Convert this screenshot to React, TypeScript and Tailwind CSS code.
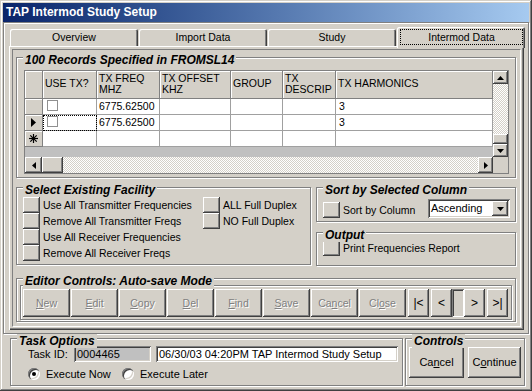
import React from 'react';

const raised = 'bg-[#d4d0c8] shadow-[inset_-1px_-1px_0_#404040,inset_1px_1px_0_#fff,inset_-2px_-2px_0_#808080]';
const sunken = 'shadow-[inset_1px_1px_0_#808080,inset_-1px_-1px_0_#fff,inset_2px_2px_0_#404040,inset_-2px_-2px_0_#d4d0c8]';
const hdr = 'bg-[#d4d0c8] border-r border-b border-[#808080] shadow-[inset_1px_1px_0_#fff]';
const cell = 'bg-white border-r border-b border-[#a0a0a0]';
const hatch = 'bg-[image:repeating-conic-gradient(#fff_0_25%,#d4d0c8_0_50%)] bg-[length:2px_2px]';
const disabled = 'text-[#808080] [text-shadow:1px_1px_0_#fff]';

function Group({ title, className, children }: { title: string; className: string; children?: React.ReactNode }) {
    return (
        <div className={`relative border border-[#808080] shadow-[inset_1px_1px_0_#fff,1px_1px_0_#fff] ${className}`}>
            <span className="absolute -top-[5px] left-[6px] bg-[#d4d0c8] px-[2px] text-[12px] leading-[14px] font-bold italic text-black whitespace-nowrap">
                {title}
            </span>
            {children}
        </div>
    );
}

function Arrow({ dir }: { dir: 'up' | 'down' | 'left' | 'right' }) {
    const vert = dir === 'up' || dir === 'down';
    const pts = { up: '0,4 7,4 3.5,0', down: '0,0 7,0 3.5,4', left: '4,0 4,7 0,3.5', right: '0,0 0,7 4,3.5' }[dir];
    return (
        <svg width={vert ? 7 : 4} height={vert ? 4 : 7}>
            <polygon points={pts} fill="#000" />
        </svg>
    );
}

const columns = [
    { w: 'w-[54px]', head: ['USE TX?'] },
    { w: 'w-[63px]', head: ['TX FREQ', 'MHZ'] },
    { w: 'w-[71px]', head: ['TX OFFSET', 'KHZ'] },
    { w: 'w-[52px]', head: ['GROUP'] },
    { w: 'w-[53px]', head: ['TX', 'DESCRIP'] },
    { w: 'w-[157px]', head: ['TX HARMONICS'] },
];

const rows = [
    { mark: '', check: true, freq: '6775.62500', harm: '3', focus: false },
    { mark: 'current', check: true, freq: '6775.62500', harm: '3', focus: true },
    { mark: 'new', check: false, freq: '', harm: '', focus: false },
];

function RecordGrid() {
    return (
        <div className="w-[485px] h-[104px] border border-[#808080] flex bg-[#c0c0c0]">
            <div className="w-[468px] flex flex-col">
                {/* header */}
                <div className="flex h-[28px]">
                    <div className={`w-[18px] ${hdr}`} />
                    {columns.map((c, i) => (
                        <div key={i} className={`${c.w} ${hdr} flex flex-col justify-center pl-[2px] pb-[2px] leading-[11px]`}>
                            {c.head.map((h) => (
                                <span key={h}>{h}</span>
                            ))}
                        </div>
                    ))}
                </div>
                {/* rows */}
                {rows.map((r, i) => (
                    <div key={i} className="flex h-[16px]">
                        <div className={`w-[18px] ${hdr} flex items-center justify-center`}>
                            {r.mark === 'current' && (
                                <svg width="5" height="9">
                                    <polygon points="0,0 5,4.5 0,9" fill="#000" />
                                </svg>
                            )}
                            {r.mark === 'new' && (
                                <svg width="9" height="9" stroke="#000" strokeWidth="1.2">
                                    <line x1="4.5" y1="0" x2="4.5" y2="9" />
                                    <line x1="0" y1="4.5" x2="9" y2="4.5" />
                                    <line x1="1.3" y1="1.3" x2="7.7" y2="7.7" />
                                    <line x1="7.7" y1="1.3" x2="1.3" y2="7.7" />
                                </svg>
                            )}
                        </div>
                        <div className={`w-[54px] ${cell} pl-[4px] pt-[1px] ${r.focus ? 'outline outline-dotted outline-black -outline-offset-1' : ''}`}>
                            {r.check && <div className="w-[11px] h-[11px] border border-[#909090] bg-white" />}
                        </div>
                        <div className={`w-[63px] ${cell} pl-[2px] leading-[15px]`}>{r.freq}</div>
                        <div className={`w-[71px] ${cell}`} />
                        <div className={`w-[52px] ${cell}`} />
                        <div className={`w-[53px] ${cell}`} />
                        <div className={`w-[157px] ${cell} pl-[3px] leading-[15px]`}>{r.harm}</div>
                    </div>
                ))}
                <div className="h-[10px] bg-[#c0c0c0]" />
                {/* horizontal scrollbar */}
                <div className="flex h-[16px]">
                    <div className={`w-[17px] ${raised} flex items-center justify-center`}>
                        <Arrow dir="left" />
                    </div>
                    <div className={`w-[21px] ${raised}`} />
                    <div className={`flex-1 ${hatch}`} />
                    <div className={`w-[15px] ${raised} flex items-center justify-center`}>
                        <Arrow dir="right" />
                    </div>
                </div>
            </div>
            {/* vertical scrollbar */}
            <div className="w-[15px] flex flex-col">
                <div className={`h-[13px] ${raised} flex items-center justify-center`}>
                    <Arrow dir="up" />
                </div>
                <div className={`h-[50px] ${hatch}`} />
                <div className={`h-[10px] ${raised}`} />
                <div className={`h-[13px] ${raised} flex items-center justify-center`}>
                    <Arrow dir="down" />
                </div>
                <div className="h-[16px] bg-[#d4d0c8]" />
            </div>
        </div>
    );
}

function SquareButton({ label }: { label: string }) {
    return (
        <div className="flex items-center h-[16px]">
            <span className={`w-[17px] h-[16px] ${raised} shrink-0`} />
            <span className="ml-[3px] whitespace-nowrap">{label}</span>
        </div>
    );
}

function Key({ text, u, w }: { text: string; u: number; w: string }) {
    return (
        <div className={`${w} h-[28px] ${raised} flex items-center justify-center ${disabled}`}>
            <span>
                {text.slice(0, u)}
                <span className="underline underline-offset-1">{text[u]}</span>
                {text.slice(u + 1)}
            </span>
        </div>
    );
}

function NavKey({ text }: { text: string }) {
    return <div className={`w-[21px] h-[28px] ${raised} flex items-center justify-center text-[12px]`}>{text}</div>;
}

function Radio({ checked, label, w }: { checked: boolean; label: string; w: string }) {
    return (
        <div className={`flex items-center ${w}`}>
            <span className="w-[12px] h-[12px] rounded-full bg-white shrink-0 flex items-center justify-center shadow-[inset_1px_1px_0_#808080,inset_2px_2px_0_#404040,inset_-1px_-1px_0_#fff,inset_-2px_-2px_0_#d4d0c8]">
                {checked && <span className="w-[4px] h-[4px] rounded-full bg-black" />}
            </span>
            <span className="ml-[6px] whitespace-nowrap">{label}</span>
        </div>
    );
}

export default function App() {
    const tabs = ['Overview', 'Import Data', 'Study'];

    return (
        <div className="w-[532px] h-[391px] bg-[#d4d0c8] p-[3px] flex flex-col text-black text-[10.5px] leading-[13px] font-['Liberation_Sans',Arial,sans-serif] shadow-[inset_-1px_-1px_0_#404040,inset_1px_1px_0_#d4d0c8,inset_-2px_-2px_0_#808080,inset_2px_2px_0_#fff] overflow-hidden">
            {/* title bar */}
            <div className="h-[19px] bg-linear-to-r from-[#0a246a] to-[#a6caf0] flex items-center pl-[3px] text-white text-[12px] font-bold">
                TAP Intermod Study Setup
            </div>

            {/* tab frame */}
            <div className="h-[312px] border border-[#808080] shadow-[inset_1px_1px_0_#fff,1px_1px_0_#fff] pt-[4px] pl-[5px]">
                <div className="flex items-end h-[19px] pl-[1px]">
                    {tabs.map((t) => (
                        <div key={t} className="w-[128px] h-[17px] mr-[1px] last:mr-0 rounded-t-[2px] flex items-center justify-center shadow-[inset_1px_1px_0_#fff,inset_-1px_0_0_#404040,inset_-2px_0_0_#808080]">
                            {t}
                        </div>
                    ))}
                    <div className="relative z-10 w-[128px] h-[21px] -mb-[2px] rounded-t-[2px] bg-[#d4d0c8] pl-[3px] pr-[2px] pt-[2px] pb-[3px] shadow-[inset_1px_1px_0_#fff,inset_-1px_0_0_#404040,inset_-2px_0_0_#808080]">
                        <div className="h-full border border-dotted border-black flex items-center justify-center">Intermod Data</div>
                    </div>
                </div>

                <div className="w-[515px] h-[284px] p-[2px] shadow-[inset_1px_1px_0_#fff,inset_-1px_-1px_0_#404040,inset_-2px_-2px_0_#808080]">
                    <div className="m-[1px] w-[509px] h-[278px] border border-[#808080] border-r-white border-b-white pl-[3px] pt-[7px]">
                        <Group title="100 Records Specified in FROMSL14" className="w-[500px] h-[121px] pl-[7px] pt-[12px]">
                            <RecordGrid />
                        </Group>

                        <div className="flex gap-[5px] mt-[9px] h-[79px] items-start">
                            <Group title="Select Existing Facility" className="w-[295px] h-[78px] pl-[6px] pt-[9px] flex">
                                <div className="w-[180px] flex flex-col">
                                    <SquareButton label="Use All Transmitter Frequencies" />
                                    <SquareButton label="Remove All Transmitter Freqs" />
                                    <SquareButton label="Use All Receiver Frequencies" />
                                    <SquareButton label="Remove All Receiver Freqs" />
                                </div>
                                <div className="flex flex-col">
                                    <SquareButton label="ALL Full Duplex" />
                                    <SquareButton label="NO Full Duplex" />
                                </div>
                            </Group>

                            <div className="flex flex-col">
                                <Group title="Sort by Selected Column" className="w-[200px] h-[35px] pl-[6px] pr-[5px] pt-[9px] pb-[3px] flex items-end">
                                    <div className="flex items-center h-[16px]">
                                        <span className={`w-[17px] h-[16px] ${raised}`} />
                                        <span className="ml-[3px]">Sort by Column</span>
                                    </div>
                                    <div className={`ml-auto w-[82px] h-[19px] bg-white p-[2px] flex items-center ${sunken}`}>
                                        <span className="flex-1 pl-[1px] text-[11px]">Ascending</span>
                                        <span className={`w-[16px] h-[15px] ${raised} flex items-center justify-center`}>
                                            <Arrow dir="down" />
                                        </span>
                                    </div>
                                </Group>
                                <Group title="Output" className="w-[200px] h-[34px] mt-[10px] pl-[6px] pt-[7px]">
                                    <SquareButton label="Print Frequencies Report" />
                                </Group>
                            </div>
                        </div>

                        <Group title="Editor Controls: Auto-save Mode" className="w-[500px] h-[44px] mt-[12px] pl-[3px] pt-[6px]">
                            <div className="w-[492px] h-[35px] border border-[#808080] shadow-[inset_1px_1px_0_#fff,1px_1px_0_#fff] pl-[2px] pt-[3px] flex">
                                <div className="flex gap-[1px]">
                                    <Key text="New" u={0} w="w-[47px]" />
                                    <Key text="Edit" u={0} w="w-[47px]" />
                                    <Key text="Copy" u={0} w="w-[47px]" />
                                    <Key text="Del" u={0} w="w-[47px]" />
                                    <Key text="Find" u={0} w="w-[47px]" />
                                    <Key text="Save" u={0} w="w-[47px]" />
                                    <Key text="Cancel" u={2} w="w-[47px]" />
                                    <Key text="Close" u={2} w="w-[47px]" />
                                </div>
                                <div className="flex ml-[2px]">
                                    <NavKey text="|<" />
                                    <div className="ml-[2px]">
                                        <NavKey text="<" />
                                    </div>
                                    <div className={`w-[12px] h-[28px] ${sunken}`} />
                                    <NavKey text=">" />
                                    <div className="ml-[2px]">
                                        <NavKey text=">|" />
                                    </div>
                                </div>
                            </div>
                        </Group>
                    </div>
                </div>
            </div>

            {/* bottom options */}
            <div className="flex gap-[2px] pl-[7px] pt-[4px] h-[54px] text-[11px]">
                <Group title="Task Options" className="w-[393px] h-[48px] pt-[7px]">
                    <div className="flex items-center h-[16px] pl-[17px]">
                        <span className="w-[46px]">Task ID:</span>
                        <div className={`w-[77px] h-[16px] bg-[#c0c0c0] pl-[3px] flex items-center ${sunken}`}>0004465</div>
                        <div className={`ml-[5px] w-[242px] h-[16px] bg-white pl-[3px] flex items-center ${sunken}`}>
                            06/30/03 04:20PM TAP Intermod Study Setup
                        </div>
                    </div>
                    <div className="flex items-center h-[14px] mt-[5px] pl-[17px]">
                        <Radio checked label="Execute Now" w="w-[94px]" />
                        <Radio checked={false} label="Execute Later" w="w-[120px]" />
                    </div>
                </Group>
                <Group title="Controls" className="w-[120px] h-[48px] pl-[3px] pt-[8px] flex gap-[4px]">
                    <div className={`w-[55px] h-[31px] ${raised} flex items-center justify-center`}>
                        <span>
                            Ca<span className="underline underline-offset-1">n</span>cel
                        </span>
                    </div>
                    <div className={`w-[53px] h-[31px] ${raised} flex items-center justify-center`}>
                        <span>
                            C<span className="underline underline-offset-1">o</span>ntinue
                        </span>
                    </div>
                </Group>
            </div>
        </div>
    );
}
